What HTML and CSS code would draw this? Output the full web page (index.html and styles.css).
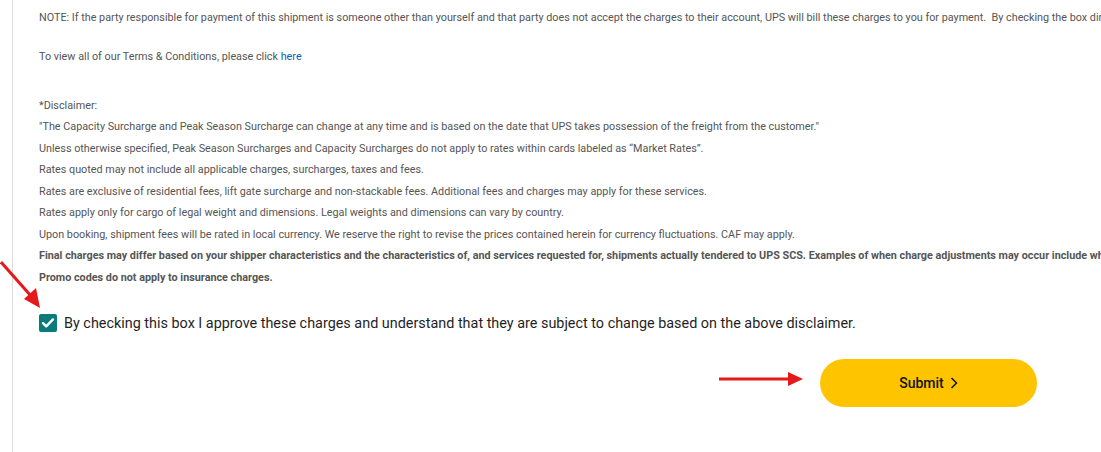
FILE: index.html
```html
<!DOCTYPE html>
<html lang="en">
<head>
  <meta charset="UTF-8" />
  <meta name="viewport" content="width=device-width, initial-scale=1.0" />
  <title>Review Charges</title>
  <link rel="stylesheet" href="styles.css">
</head>
<body>
  <div class="panel">
    <p class="note">NOTE: If the party responsible for payment of this shipment is someone other than yourself and that party does not accept the charges to their account, UPS will bill these charges to you for payment.&nbsp; By checking the box directly below, you agree to pay these charges in that event.</p>

    <p class="terms">To view all of our Terms &amp; Conditions, please click <a href="#">here</a></p>

    <div class="disclaimer">
      <p>*Disclaimer:</p>
      <p>"The Capacity Surcharge and Peak Season Surcharge can change at any time and is based on the date that UPS takes possession of the freight from the customer."</p>
      <p>Unless otherwise specified, Peak Season Surcharges and Capacity Surcharges do not apply to rates within cards labeled as “Market Rates”.</p>
      <p>Rates quoted may not include all applicable charges, surcharges, taxes and fees.</p>
      <p>Rates are exclusive of residential fees, lift gate surcharge and non-stackable fees. Additional fees and charges may apply for these services.</p>
      <p>Rates apply only for cargo of legal weight and dimensions. Legal weights and dimensions can vary by country.</p>
      <p>Upon booking, shipment fees will be rated in local currency. We reserve the right to revise the prices contained herein for currency fluctuations. CAF may apply.</p>
      <p class="strong">Final charges may differ based on your shipper characteristics and the characteristics of, and services requested for, shipments actually tendered to UPS SCS. Examples of when charge adjustments may occur include when actual weight or dimensions differ from those quoted.</p>
      <p class="strong">Promo codes do not apply to insurance charges.</p>
    </div>

    <label class="approve">
      <span class="checkbox">
        <svg width="14" height="12" viewBox="0 0 14 12"><path d="M2 6.2l3.2 3.1L12 2.4" fill="none" stroke="#fff" stroke-width="2.4" stroke-linecap="round" stroke-linejoin="round"/></svg>
      </span>
      By checking this box I approve these charges and understand that they are subject to change based on the above disclaimer.
    </label>

    <div class="actions">
      <button type="button" class="submit">Submit
        <svg width="8" height="12" viewBox="0 0 8 12"><path d="M1.5 1l5 5-5 5" fill="none" stroke="#121212" stroke-width="1.5"/></svg>
      </button>
    </div>
  </div>

  <!-- annotation arrows -->
  <svg class="marks" width="1101" height="452" viewBox="0 0 1101 452">
    <line x1="1" y1="262" x2="31" y2="296" stroke="#e3191b" stroke-width="3"/>
    <polygon points="40,308 24,299 36,288" fill="#e3191b"/>
    <line x1="719" y1="379" x2="790" y2="379" stroke="#e3191b" stroke-width="3"/>
    <polygon points="803,379 788,372 788,386" fill="#e3191b"/>
  </svg>
</body>
</html>
```

FILE: styles.css
```css
:root {
  --text: #555555;
  --dark: #1f1f1f;
  --line: #dcdcdc;
  --link: #0662bb;
  --teal: #0a7b7b;
  --yellow: #ffc400;
}

body {
  margin: 0;
  font-family: Roboto, 'Liberation Sans', sans-serif;
  background: #fff;
  overflow: hidden;
  height: 452px;
}

.panel {
  margin-left: 12px;
  border-left: 1px solid var(--line);
  padding: 7px 0 40px 26px;
  min-height: 452px;
  box-sizing: border-box;
}

p {
  margin: 0;
  font-size: 10.8px;
  line-height: 21.5px;
  color: var(--text);
  white-space: nowrap;
}

.terms {
  margin-top: 17px;
}

.terms a {
  color: var(--link);
  text-decoration: none;
}

.disclaimer {
  margin-top: 27.5px;
}

.strong {
  font-weight: 700;
}

.approve {
  display: flex;
  align-items: center;
  gap: 7px;
  margin-top: 26px;
  font-size: 14.4px;
  color: var(--dark);
  white-space: nowrap;
}

.checkbox {
  width: 18px;
  height: 18px;
  border-radius: 2px;
  background: var(--teal);
  display: flex;
  align-items: center;
  justify-content: center;
  flex: none;
}

.actions {
  width: 998px;
  display: flex;
  justify-content: flex-end;
  margin-top: 27px;
}

.submit {
  width: 217px;
  height: 48px;
  border: none;
  border-radius: 24px;
  background: var(--yellow);
  font-family: inherit;
  font-size: 14px;
  font-weight: 500;
  color: #121212;
  display: flex;
  align-items: center;
  justify-content: center;
  gap: 6px;
  cursor: pointer;
}

.marks {
  position: absolute;
  left: 0;
  top: 0;
  pointer-events: none;
}
```
